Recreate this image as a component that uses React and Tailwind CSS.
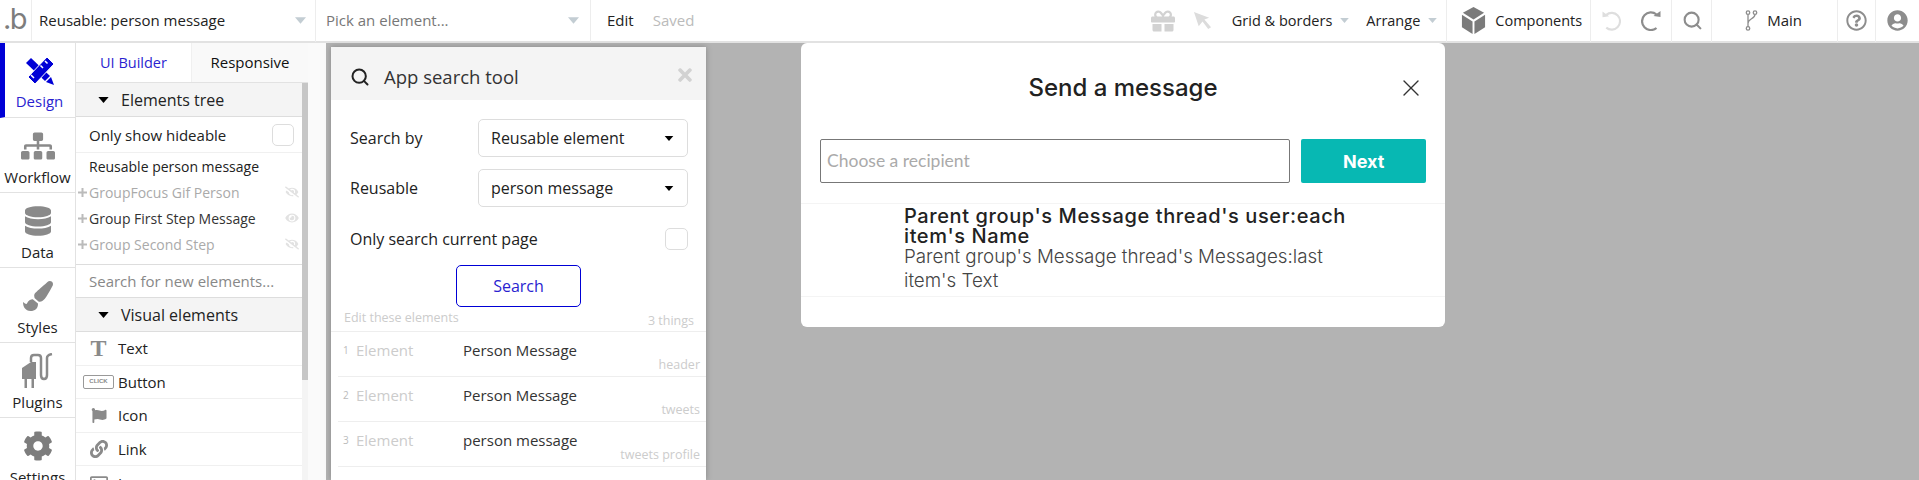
import { FaGift, FaSitemap, FaDatabase, FaPaintBrush, FaCog, FaFlag, FaLink, FaRegImage, FaEye, FaEyeSlash, FaUserCircle, FaRegQuestionCircle, FaTimes } from "react-icons/fa";
import { X, Search } from "lucide-react";

const Caret = ({ className }) => (
  <svg viewBox="0 0 12 7" className={className} fill="currentColor"><path d="M0 0h12L6 7z" /></svg>
);

const DesignIcon = () => (
  <svg viewBox="0 0 28 28" className="w-[28px] h-[28px] text-[#0000d6]" fill="currentColor">
    {/* pencil */}
    <path d="M0 6l5-5 19 18-5 5z" />
    <path d="M20 25l5-5 3 8z" />
    {/* ruler */}
    <path d="M21 0l7 7L9 27l-7-7z" stroke="#fff" strokeWidth="1" />
    <path d="M19 4l2.5 2.5M14.5 8.5L17 11M5 18l3 3" stroke="#fff" strokeWidth="1.5" />
  </svg>
);

const PlugIcon = () => (
  <svg viewBox="8 7 32 36" className="w-[32px] h-[36px] text-[#8a8a8a]" fill="currentColor">
    <path d="M8 22l9-6h5v17H8z" />
    <path d="M10.5 33H13v9h-2.5zM17.5 33H20v9h-2.5z" />
    <path d="M17 16v-4q0-3 3-3h4q3 0 3 3v17q0 4 3 4t3-4V12q0-3 5-4" fill="none" stroke="currentColor" strokeWidth="2.5" />
  </svg>
);

const CubeIcon = () => (
  <svg viewBox="0 0 24 28" className="w-[25px] h-[27px] text-[#7b7b7b]" fill="currentColor">
    <path d="M12 0l11 6-11 7L1 6z" />
    <path d="M0 8l11 7v13L0 21z" />
    <path d="M24 8l-11 7v13l11-7z" />
  </svg>
);

const Arc = ({ className, flip }) => (
  <svg viewBox="0 0 20 20" className={className} fill="none" stroke="currentColor" strokeWidth="2.2" style={flip ? { transform: "scaleX(-1)" } : undefined}>
    <path d="M15.5 3.5A8.8 8.8 0 1 0 15.5 17" />
    <path d="M12.5 5l7 1 0-6z" fill="currentColor" stroke="none" />
  </svg>
);

const Divider = ({ className }) => <div className={`w-px h-[42px] bg-[#ededed] shrink-0 ${className || ""}`} />;

const TopBar = () => (
  <div className="flex items-center h-[43px] border-b-2 border-[#e2e2e2] bg-white text-[15px] text-[#222]">
    <div className="w-[31px] shrink-0 flex items-center justify-center text-[29px] leading-none tracking-tighter font-['Inter',sans-serif] text-[#7d7d7d] pb-1 pr-[2px]">.b</div>
    <Divider />
    <div className="w-[283px] shrink-0 flex items-center justify-between pl-[7px] pr-[9px]">
      <span>Reusable: person message</span>
      <Caret className="w-[11px] h-[7px] text-[#c3cdd3]" />
    </div>
    <Divider />
    <div className="w-[274px] shrink-0 flex items-center justify-between pl-[10px] pr-[11px]">
      <span className="text-[#777]">Pick an element...</span>
      <Caret className="w-[11px] h-[7px] text-[#c3cdd3]" />
    </div>
    <Divider />
    <span className="ml-[16px]">Edit</span>
    <span className="ml-[19px] text-[#bbb]">Saved</span>

    <div className="ml-auto flex items-center h-full text-[14.5px]">
      <FaGift className="w-[26px] h-[24px] text-[#d2d2d2]" />
      <svg viewBox="0 0 20 20" className="ml-[17px] w-[19px] h-[19px] text-[#dcdcdc]" fill="currentColor"><path d="M1 1l16 6-5 2 7 8-3 2-6-8-4 5z" /></svg>
      <span className="ml-[20px]">Grid &amp; borders</span>
      <Caret className="ml-[8px] w-[9px] h-[5px] text-[#c3cdd3]" />
      <span className="ml-[17px]">Arrange</span>
      <Caret className="ml-[8px] w-[9px] h-[5px] text-[#c3cdd3]" />
      <Divider className="ml-[9px]" />
      <div className="ml-[14px]"><CubeIcon /></div>
      <span className="ml-[9px]">Components</span>
      <Divider className="ml-[8px]" />
      <Arc className="ml-[11px] w-[19px] h-[20px] text-[#dedede]" flip />
      <Arc className="ml-[20px] w-[20px] h-[20px] text-[#8d8d8d]" />
      <Divider className="ml-[10px]" />
      <Search className="ml-[10px] w-[21px] h-[21px] text-[#8d8d8d]" strokeWidth={2.4} />
      <Divider className="ml-[8px]" />
      <svg viewBox="0 0 14 24" className="ml-[33px] w-[13px] h-[21px] text-[#8d8d8d]" fill="none" stroke="currentColor" strokeWidth="1.5">
        <circle cx="3" cy="3" r="2" /><circle cx="11" cy="3" r="2" /><circle cx="3" cy="21" r="2" />
        <path d="M3 5v14M11 5c0 5-8 5-8 10" />
      </svg>
      <span className="ml-[9px] text-[15px]">Main</span>
      <Divider className="ml-[35px]" />
      <FaRegQuestionCircle className="ml-[8px] w-[21px] h-[21px] text-[#8d8d8d]" />
      <Divider className="ml-[8px]" />
      <FaUserCircle className="ml-[11px] w-[21px] h-[21px] text-[#8d8d8d]" />
      <div className="w-[11px]" />
    </div>
  </div>
);

const railItems = [
  { label: "Workflow", icon: <FaSitemap className="w-[34px] h-[30px] text-[#8a8a8a]" /> },
  { label: "Data", icon: <FaDatabase className="w-[26px] h-[30px] text-[#8a8a8a]" /> },
  { label: "Styles", icon: <FaPaintBrush className="w-[30px] h-[30px] text-[#8a8a8a]" /> },
  { label: "Plugins", icon: <PlugIcon /> },
  { label: "Settings", icon: <FaCog className="w-[30px] h-[30px] text-[#7d7d7d]" /> },
];

const Rail = () => (
  <div className="w-[76px] shrink-0 border-r border-[#e2e2e2] bg-white text-[15px] text-[#222]">
    <div className="h-[75px] border-l-[5px] border-[#0000d6] border-b border-b-[#e2e2e2] flex flex-col items-center pr-[1px] text-[#2a1fd0]">
      <div className="h-[46px] pt-[10px] flex items-center justify-center"><DesignIcon /></div>
      <span className="mt-[1px]">Design</span>
    </div>
    {railItems.map((item) => (
      <div key={item.label} className="h-[75px] border-b border-[#e2e2e2] flex flex-col items-center justify-start">
        <div className="h-[46px] pt-[10px] flex items-center justify-center">{item.icon}</div>
        <span className="mt-[2px]">{item.label}</span>
      </div>
    ))}
  </div>
);

const TreeRow = ({ label, muted, hidden }) => (
  <div className={`flex items-center h-[26px] ${muted ? "text-[#aaa]" : "text-[#333]"}`}>
    <svg viewBox="0 0 9 9" className="w-[9px] h-[9px] ml-[2px] mr-[2px] text-[#bbb]" fill="currentColor"><path d="M3.5 0h2v3.5H9v2H5.5V9h-2V5.5H0v-2h3.5z" /></svg>
    <span className="flex-1">{label}</span>
    {hidden ? <FaEyeSlash className="w-[14px] h-[12px] mr-[3px] text-[#e2e2e2]" /> : <FaEye className="w-[14px] h-[12px] mr-[3px] text-[#e2e2e2]" />}
  </div>
);

const SectionHeader = ({ label }) => (
  <div className="h-[34px] flex items-center bg-[#f4f4f4] border-b border-[#ddd] pl-[22px] text-[16px] text-[#222]">
    <Caret className="w-[11px] h-[6px] text-black mr-[12px]" />
    <span>{label}</span>
  </div>
);

const ElementRow = ({ icon, label, last }) => (
  <div className={`h-[33.5px] flex items-center ${last ? "" : "border-b border-[#f0f0f0]"}`}>
    <div className="w-[42px] shrink-0 flex justify-center pl-[3px]">{icon}</div>
    <span className="text-[#222] text-[15px]">{label}</span>
  </div>
);

const SidePanel = () => (
  <div className="w-[232px] shrink-0 flex flex-col bg-white text-[14px] text-[#222]">
    <div className="flex h-[40px] shrink-0 border-b border-[#e2e2e2]">
      <div className="w-[115px] flex items-center justify-center text-[#2a1fd0] text-[14.5px]">UI Builder</div>
      <div className="flex-1 flex items-center justify-center bg-[#f9f9f9] border-l border-[#f0f0f0] text-[#111] text-[15px]">Responsive</div>
    </div>
    <div className="flex flex-1 min-h-0">
      <div className="w-[226px] shrink-0">
        <SectionHeader label="Elements tree" />
        <div className="h-[36px] flex items-center justify-between pl-[13px] pr-[8px] border-b border-[#f0f0f0] pt-[1px] text-[15px]">
          <span>Only show hideable</span>
          <div className="w-[22px] h-[22px] border border-[#ddd] rounded-[5px]" />
        </div>
        <div className="h-[25px] flex items-center pl-[13px] mt-[1px]">Reusable person message</div>
        <TreeRow label="GroupFocus Gif Person" muted hidden />
        <TreeRow label="Group First Step Message" />
        <TreeRow label="Group Second Step" muted hidden />
        <div className="h-[34px] flex items-center pl-[13px] border-y border-[#ddd] mt-[7px] text-[#888] text-[15px]">Search for new elements...</div>
        <SectionHeader label="Visual elements" />
        <ElementRow icon={<span className="font-['Liberation_Serif',serif] font-bold text-[24px] leading-none text-[#8a8a8a]">T</span>} label="Text" />
        <ElementRow
          icon={<span className="w-[31px] h-[14px] border border-[#999] rounded-[2px] flex items-center justify-center text-[6px] font-bold text-[#888] font-['Liberation_Sans',sans-serif]">CLICK</span>}
          label="Button"
        />
        <ElementRow icon={<FaFlag className="w-[18px] h-[15px] text-[#8a8a8a]" />} label="Icon" />
        <ElementRow icon={<FaLink className="w-[18px] h-[18px] text-[#8a8a8a]" />} label="Link" />
        <ElementRow icon={<FaRegImage className="w-[20px] h-[18px] text-[#8a8a8a]" />} label="Image" last />
      </div>
      <div className="w-[6px] shrink-0 bg-[#f4f4f4]">
        <div className="h-[297px] bg-[#c6c6c6]" />
      </div>
    </div>
  </div>
);

const Select = ({ value }) => (
  <div className="w-[210px] h-[38px] border border-[#ddd] rounded-[5px] flex items-center justify-between pl-[12px] pr-[13px] text-[#222]">
    <span>{value}</span>
    <Caret className="w-[10px] h-[5px] text-black" />
  </div>
);

const results = [
  { n: 1, name: "Person Message", hint: "header" },
  { n: 2, name: "Person Message", hint: "tweets" },
  { n: 3, name: "person message", hint: "tweets profile" },
];

const SearchTool = () => (
  <div className="w-[375px] shrink-0 bg-white text-[16px] text-[#222] shadow-[0_0_6px_rgba(0,0,0,0.25)]">
    <div className="h-[53px] bg-[#f4f4f4] flex items-center pl-[19px] pr-[11px] pt-[6px]">
      <Search className="w-[20px] h-[20px] text-[#222]" strokeWidth={2.4} />
      <span className="ml-[14px] text-[18.5px] text-[#333]">App search tool</span>
      <FaTimes className="ml-auto w-[20px] h-[20px] text-[#d2d2d2] -mt-[3px]" />
    </div>
    <div className="pl-[19px] pr-[18px] pt-[19px]">
      <div className="flex items-center justify-between">
        <span>Search by</span>
        <Select value="Reusable element" />
      </div>
      <div className="flex items-center justify-between mt-[12px]">
        <span>Reusable</span>
        <Select value="person message" />
      </div>
      <div className="flex items-center justify-between mt-[20px]">
        <span>Only search current page</span>
        <div className="w-[23px] h-[22px] border border-[#ddd] rounded-[5px]" />
      </div>
      <div className="flex justify-center mt-[14px] pr-[1px]">
        <div className="w-[125px] h-[42px] border border-[#0000d6] rounded-[5px] flex items-center justify-center text-[#2a1fd0]">Search</div>
      </div>
    </div>
    <div className="flex items-center justify-between pl-[13px] pr-[12px] h-[25px] text-[12.5px] text-[#ccc] border-b border-[#eee]">
      <span className="-mt-[1px]">Edit these elements</span>
      <span className="mt-[4px]">3 things</span>
    </div>
    {results.map((row) => (
      <div key={row.n} className="relative ml-[7px] h-[45px] border-b border-[#eee] flex items-start pt-[7px] text-[15px]">
        <span className="w-[18px] pl-[5px] text-[10px] leading-[22px] text-[#bbb]">{row.n}</span>
        <span className="w-[107px] text-[#ccc]">Element</span>
        <span className="text-[#333]">{row.name}</span>
        <span className="absolute right-[6px] bottom-[1px] text-[12.5px] text-[#ccc]">{row.hint}</span>
      </div>
    ))}
  </div>
);

const MessageModal = () => (
  <div className="w-[644px] h-[284px] shrink-0 ml-[95px] -mt-[4px] bg-white rounded-[6px] font-['Inter',sans-serif] text-[#222]">
    <div className="relative h-[96px] flex items-center justify-center pb-[6px]">
      <span className="text-[24px] font-medium">Send a message</span>
      <X className="absolute right-[20px] top-[31px] w-[28px] h-[28px] text-[#333]" strokeWidth={1.2} />
    </div>
    <div className="flex px-[19px] gap-[11px]">
      <div className="w-[471px] h-[44px] border border-[#777] rounded-[2px] flex items-center pl-[6px] text-[17.5px] text-[#aaa] font-['Lato',sans-serif]">Choose a recipient</div>
      <div className="w-[125px] h-[44px] bg-[#07b8b3] rounded-[2px] flex items-center justify-center text-white text-[18px] font-bold">Next</div>
    </div>
    <div className="mt-[20px] h-[94px] border-y border-[#f4f4f4] pl-[103px]">
      <div className="w-[450px] text-[20px] leading-[20px] tracking-[0.6px] font-medium pt-[2px]">Parent group's Message thread's user:each item's Name</div>
      <div className="w-[450px] text-[18.8px] leading-[24px] font-light text-[#444] -mt-[1px]">Parent group's Message thread's Messages:last item's Text</div>
    </div>
  </div>
);

export default function App() {
  return (
    <div className="h-[480px] overflow-hidden flex flex-col bg-[#b3b3b3] font-['Open_Sans',sans-serif]">
      <TopBar />
      <div className="flex flex-1 min-h-0">
        <Rail />
        <SidePanel />
        <div className="w-[18px] shrink-0 bg-[#fafafa]" />
        <div className="flex flex-1 min-w-0 pl-[5px] pt-[4px]">
          <SearchTool />
          <MessageModal />
        </div>
      </div>
    </div>
  );
}
